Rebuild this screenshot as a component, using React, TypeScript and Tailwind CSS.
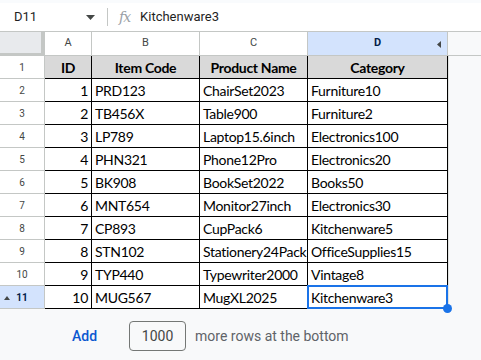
const rows = [
  [1, "PRD123", "ChairSet2023", "Furniture10"],
  [2, "TB456X", "Table900", "Furniture2"],
  [3, "LP789", "Laptop15.6inch", "Electronics100"],
  [4, "PHN321", "Phone12Pro", "Electronics20"],
  [5, "BK908", "BookSet2022", "Books50"],
  [6, "MNT654", "Monitor27inch", "Electronics30"],
  [7, "CP893", "CupPack6", "Kitchenware5"],
  [8, "STN102", "Stationery24Pack", "OfficeSupplies15"],
  [9, "TYP440", "Typewriter2000", "Vintage8"],
  [10, "MUG567", "MugXL2025", "Kitchenware3"],
];

const cell = "h-[23px] border-r border-b border-black flex items-center whitespace-nowrap px-[3px] text-[14px] tracking-[-0.3px] text-black";

export default function App() {
  return (
    <div className="w-[481px] h-[360px] overflow-hidden bg-[#f8f9fa] font-['Roboto',sans-serif] flex flex-col">
      {/* formula bar */}
      <div className="h-[32px] bg-white border-t-[3px] border-t-[#f9fbfd] border-b border-b-[#c4c7c5] flex items-center text-[13px] text-[#1f1f1f]">
        <div className="w-[107px] flex items-center pl-[14px] pr-[12px]">
          <span>D11</span>
          <svg className="ml-auto" width="9" height="5" viewBox="0 0 9 5"><path d="M0 0h9L4.5 5z" fill="#444746" /></svg>
        </div>
        <div className="w-px h-[18px] bg-[#c4c7c5]" />
        <span className="ml-[11px] italic text-[#9aa0a6] font-['DejaVu_Serif',serif] text-[14px] tracking-[-1px]">fx</span>
        <span className="ml-[10px]">Kitchenware3</span>
      </div>

      {/* column headers */}
      <div className="flex h-[24px] border-b border-[#c4c7c5] text-[11px] text-[#444746]">
        <div className="w-[45px] bg-[#e8eaed] border-r-[4px] border-b-[3px] border-[#c4c7c5] box-border h-[24px]" />
        <div className="w-[47px] bg-white border-r border-[#c4c7c5] flex items-center justify-center">A</div>
        <div className="w-[108px] bg-white border-r border-[#c4c7c5] flex items-center justify-center">B</div>
        <div className="w-[108px] bg-white border-r border-[#c4c7c5] flex items-center justify-center">C</div>
        <div className="w-[140px] bg-[#d3e3fd] border-r border-[#c4c7c5] flex items-center justify-center relative font-bold text-[#041e49]">
          D
          <svg className="absolute right-[6px] top-[9px]" width="4" height="7" viewBox="0 0 4 7"><path d="M4 0v7L0 3.5z" fill="#444746" /></svg>
        </div>
        <div className="flex-1" />
      </div>

      {/* grid */}
      <div className="flex font-['Lato',sans-serif]">
        <div className="w-[45px] flex flex-col font-['Roboto',sans-serif] text-[10px] text-[#444746]">
          {Array.from({ length: 11 }, (_, i) => (
            <div
              key={i}
              className={
                i === 10
                  ? "h-[23px] border-b border-r border-[#c4c7c5] bg-[#d3e3fd] flex items-center justify-center relative font-bold text-[#041e49]"
                  : "h-[23px] border-b border-r border-[#c4c7c5] bg-white flex items-center justify-center"
              }
            >
              {i === 10 && (
                <svg className="absolute left-[4px] top-[10px]" width="6" height="4" viewBox="0 0 6 4"><path d="M0 4h6L3 0z" fill="#444746" /></svg>
              )}
              {i + 1}
            </div>
          ))}
        </div>

        <div className="flex flex-col">
          <div className="flex bg-[#d9d9d9] font-bold">
            <div className={`${cell} w-[47px] justify-center`}>ID</div>
            <div className={`${cell} w-[108px] justify-center`}>Item Code</div>
            <div className={`${cell} w-[108px] justify-center`}>Product Name</div>
            <div className={`${cell} w-[140px] justify-center`}>Category</div>
          </div>
          {rows.map((r, i) => (
            <div key={i} className="flex bg-white">
              <div className={`${cell} w-[47px] justify-end`}>{r[0]}</div>
              <div className={`${cell} w-[108px]`}>{r[1]}</div>
              <div className={`${cell} w-[108px]`}>{r[2]}</div>
              <div className={`${cell} w-[140px] relative`}>
                {r[3]}
                {i === 9 && (
                  <>
                    <div className="absolute left-[-1px] top-[-1px] right-[-1px] bottom-[-1px] border-2 border-[#1a73e8]" />
                    <div className="absolute right-[-5px] bottom-[-5px] w-[9px] h-[9px] rounded-full bg-[#1a73e8] z-10" />
                  </>
                )}
              </div>
            </div>
          ))}
        </div>
        <div className="flex-1 bg-[#f8f9fa] border-l border-[#e1e3e1]" />
      </div>

      {/* add rows */}
      <div className="flex items-center mt-[12px] text-[14px]">
        <span className="ml-[72px] text-[#0b57d0] font-medium">Add</span>
        <div className="ml-[32px] w-[57px] h-[30px] border border-[#747775] rounded-[4px] flex items-center justify-center text-[#444746] bg-[#f8f9fa]">1000</div>
        <span className="ml-[9px] text-[#5f6368]">more rows at the bottom</span>
      </div>
    </div>
  );
}
